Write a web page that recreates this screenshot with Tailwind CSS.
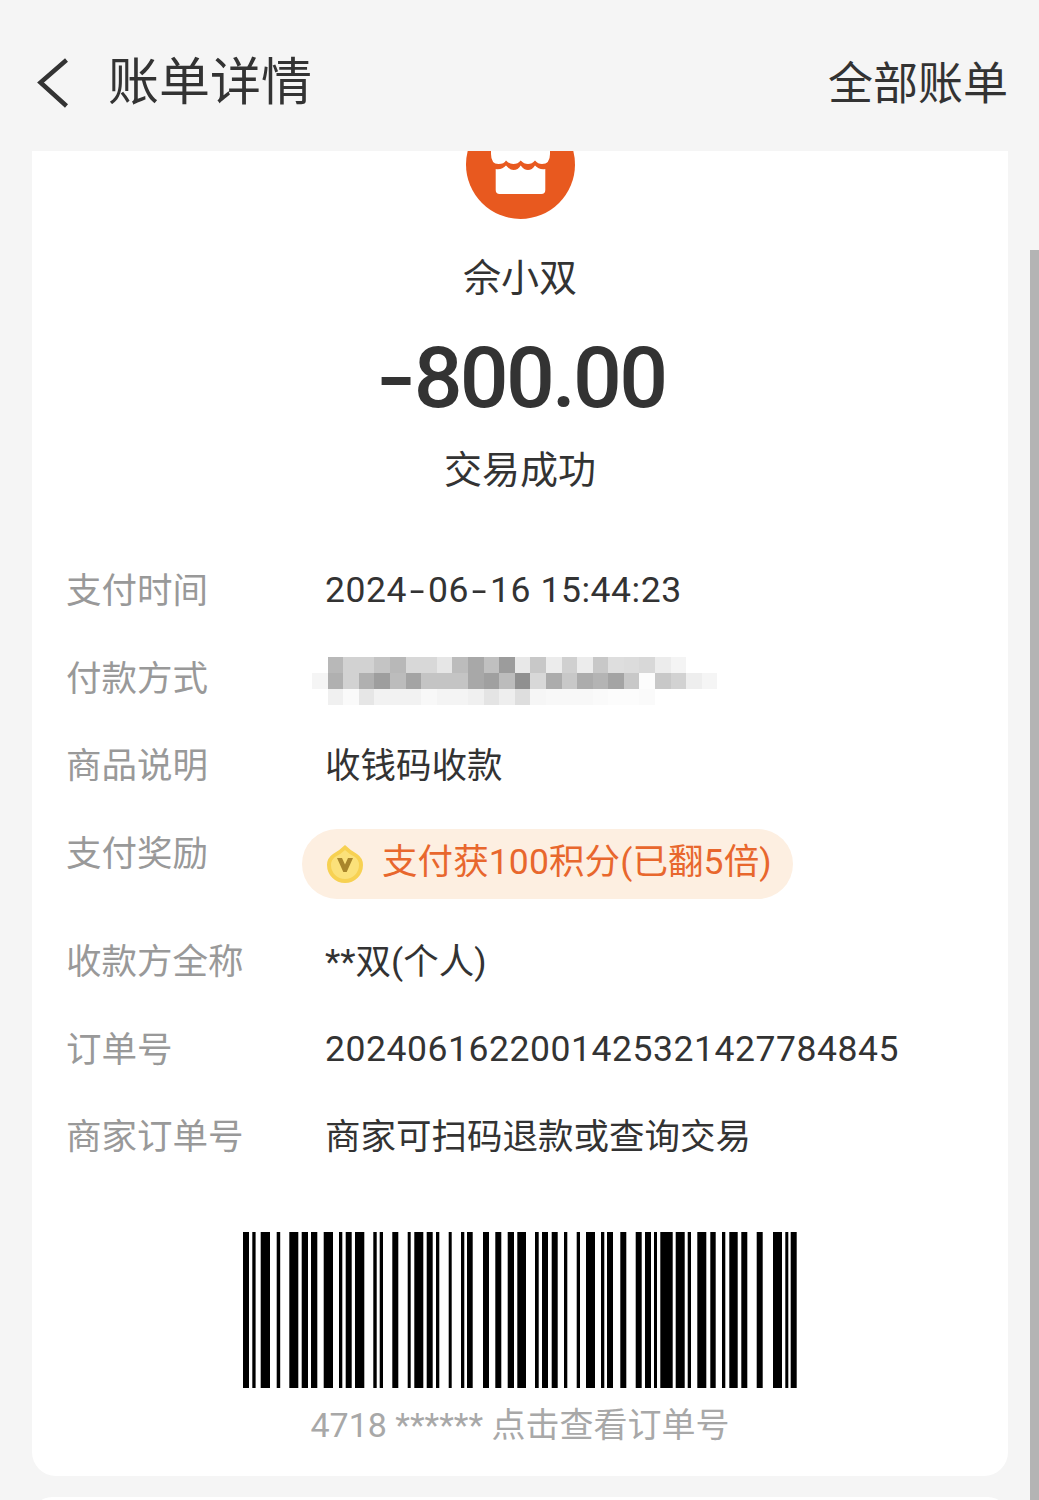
<!DOCTYPE html>
<html>

<head>
    <title>账单详情</title>
    <meta charset="utf-8" />
    <meta name="viewport" content="width=device-width, initial-scale=1.0" />
    <script src="https://cdn.jsdelivr.net/npm/@tailwindcss/browser@4"></script>
</head>

<body class="relative h-[1500px] overflow-hidden bg-[#f5f5f5] text-[#333333] font-[family-name:Roboto,'Noto_Sans_CJK_SC',sans-serif]">
    <!-- header -->
    <div class="flex h-[151px] items-start justify-between pl-[36px] pr-[31px]">
        <div class="flex items-center pt-[53px]">
            <svg class="h-[60px] w-[36px]" viewBox="0 0 36 60" fill="none" stroke="#333333" stroke-width="4.5">
                <path d="M30.5 7 L4.5 29.5 L30.5 53" />
            </svg>
            <h1 class="ml-[36px] text-[51px] leading-[60px] font-normal">账单详情</h1>
        </div>
        <div class="pt-[57px] text-[45px] leading-[56px]">全部账单</div>
    </div>

    <!-- main card -->
    <div class="mx-[32px] h-[1325px] w-[976px] overflow-hidden rounded-b-[24px] bg-white">
        <div class="flex flex-col items-center">
            <svg class="-mt-[41px] h-[109px] w-[109px]" viewBox="0 0 109 109">
                <circle cx="54.5" cy="54.5" r="54.5" fill="#e8591f" />
                <path fill="#ffffff" d="M25 0 V44 Q25 54 32.5 54 Q38 54 40 50.5 Q43 54 47.3 54 Q52 54 54.7 50.5 Q58 54 62 54 Q66 54 69 50.5 Q72 54 76 54 Q84 54 84 44 V0 Z" />
                <path fill="#ffffff" d="M29.7 59 Q36 60 40 55.5 Q44 60 47.5 60 Q52 60 54.7 55.5 Q58 60 62 60 Q66 60 69 55.5 Q73 60 79.3 59 V80 Q79.3 84 75.3 84 H33.7 Q29.7 84 29.7 80 Z" />
            </svg>
            <div class="mt-[32px] text-[38px] leading-[54px]">佘小双</div>
            <div class="mt-[23px] text-[86px] leading-[100px] font-medium tracking-[-2.8px]"><span class="inline-block w-[39px] scale-x-[1.3] text-center">-</span>800.00</div>
            <div class="mt-[15px] text-[38px] leading-[54px]">交易成功</div>
        </div>

        <!-- detail rows -->
        <div class="mt-[50px] pl-[34px] text-[35.5px] leading-[88px]">
            <div class="flex h-[87.7px]">
                <div class="w-[259px] text-[#999999]">支付时间</div>
                <div class="-mt-[1px] tracking-[0.55px]">2024<span class="inline-block w-[21px] scale-x-150 text-center">-</span>06<span class="inline-block w-[21px] scale-x-150 text-center">-</span>16 15:44:23</div>
            </div>
            <div class="flex h-[87.7px]">
                <div class="w-[259px] text-[#999999]">付款方式</div>
                <!-- mosaic over the account name -->
                <div class="-ml-[13px] mt-[22.5px] flex h-[48px] flex-col blur-[0.6px]">
                    <div class="ml-[15.6px] flex h-[16px]">
                        <div class="w-[15.6px] bg-[#b8b8b8]"></div><div class="w-[15.6px] bg-[#d2d2d2]"></div><div class="w-[15.6px] bg-[#d2d2d2]"></div><div class="w-[15.6px] bg-[#c4c4c4]"></div><div class="w-[15.6px] bg-[#b8b8b8]"></div><div class="w-[15.6px] bg-[#d8d8d8]"></div><div class="w-[15.6px] bg-[#d8d8d8]"></div><div class="w-[15.6px] bg-[#e6e6e6]"></div><div class="w-[15.6px] bg-[#bcbcbc]"></div><div class="w-[15.6px] bg-[#a8a8a8]"></div><div class="w-[15.6px] bg-[#c0c0c0]"></div><div class="w-[15.6px] bg-[#9c9c9c]"></div><div class="w-[15.6px] bg-[#e8e8e8]"></div><div class="w-[15.6px] bg-[#c8c8c8]"></div><div class="w-[15.6px] bg-[#ececec]"></div><div class="w-[15.6px] bg-[#d0d0d0]"></div><div class="w-[15.6px] bg-[#ececec]"></div><div class="w-[15.6px] bg-[#c8c8c8]"></div><div class="w-[15.6px] bg-[#dedede]"></div><div class="w-[15.6px] bg-[#dcdcdc]"></div><div class="w-[15.6px] bg-[#d8d8d8]"></div><div class="w-[15.6px] bg-[#ececec]"></div><div class="w-[15.6px] bg-[#f4f4f4]"></div>
                    </div>
                    <div class="flex h-[16px]">
                        <div class="w-[15.6px] bg-[#f5f5f5]"></div><div class="w-[15.6px] bg-[#b0b0b0]"></div><div class="w-[15.6px] bg-[#d2d2d2]"></div><div class="w-[15.6px] bg-[#b0b0b0]"></div><div class="w-[15.6px] bg-[#9e9e9e]"></div><div class="w-[15.6px] bg-[#bcbcbc]"></div><div class="w-[15.6px] bg-[#a4a4a4]"></div><div class="w-[15.6px] bg-[#c4c4c4]"></div><div class="w-[15.6px] bg-[#c4c4c4]"></div><div class="w-[15.6px] bg-[#c4c4c4]"></div><div class="w-[15.6px] bg-[#a8a8a8]"></div><div class="w-[15.6px] bg-[#a0a0a0]"></div><div class="w-[15.6px] bg-[#bcbcbc]"></div><div class="w-[15.6px] bg-[#909090]"></div><div class="w-[15.6px] bg-[#d8d8d8]"></div><div class="w-[15.6px] bg-[#acacac]"></div><div class="w-[15.6px] bg-[#c8c8c8]"></div><div class="w-[15.6px] bg-[#acacac]"></div><div class="w-[15.6px] bg-[#b4b4b4]"></div><div class="w-[15.6px] bg-[#a4a4a4]"></div><div class="w-[15.6px] bg-[#c8c8c8]"></div><div class="w-[15.6px] bg-[#fcfcfc]"></div><div class="w-[15.6px] bg-[#c8c8c8]"></div><div class="w-[15.6px] bg-[#d2d2d2]"></div><div class="w-[15.6px] bg-[#eeeeee]"></div><div class="w-[15.6px] bg-[#f5f5f5]"></div>
                    </div>
                    <div class="ml-[15.6px] flex h-[16px]">
                        <div class="w-[15.6px] bg-[#f0f0f0]"></div><div class="w-[15.6px] bg-[#fafafa]"></div><div class="w-[15.6px] bg-[#e6e6e6]"></div><div class="w-[15.6px] bg-[#f2f2f2]"></div><div class="w-[15.6px] bg-[#f2f2f2]"></div><div class="w-[15.6px] bg-[#f2f2f2]"></div><div class="w-[15.6px] bg-[#f8f8f8]"></div><div class="w-[15.6px] bg-[#f4f4f4]"></div><div class="w-[15.6px] bg-[#f4f4f4]"></div><div class="w-[15.6px] bg-[#f0f0f0]"></div><div class="w-[15.6px] bg-[#e4e4e4]"></div><div class="w-[15.6px] bg-[#eeeeee]"></div><div class="w-[15.6px] bg-[#dedede]"></div><div class="w-[15.6px] bg-[#f6f6f6]"></div><div class="w-[15.6px] bg-[#f8f8f8]"></div><div class="w-[15.6px] bg-[#f8f8f8]"></div><div class="w-[15.6px] bg-[#f8f8f8]"></div><div class="w-[15.6px] bg-[#fafafa]"></div><div class="w-[15.6px] bg-[#fcfcfc]"></div><div class="w-[15.6px] bg-[#fcfcfc]"></div><div class="w-[15.6px] bg-[#fafafa]"></div>
                    </div>
                </div>
            </div>
            <div class="flex h-[87.7px]">
                <div class="w-[259px] text-[#999999]">商品说明</div>
                <div>收钱码收款</div>
            </div>
            <div class="flex h-[108px]">
                <div class="w-[259px] text-[#999999]">支付奖励</div>
                <div class="-ml-[23px] mt-[19px] flex h-[70px] w-[491px] items-center rounded-full bg-[#fdefe1] pl-[24px] text-[#e8672d]">
                    <svg class="h-[38px] w-[38px] shrink-0" viewBox="0 0 38 38">
                        <path fill="#f7d152" d="M19 0 Q24 5 31 9 Q37 13 37 20 A18 18 0 0 1 1 20 Q1 13 7 9 Q14 5 19 0 Z" />
                        <path fill="#fbe17a" d="M19 5 Q23 9 29 12 Q33 15 33 20 A14 14 0 0 1 5 20 Q5 15 9 12 Q15 9 19 5 Z" />
                        <path fill="#a9862c" d="M11 13 L16 13 L19 19.5 L22 13 L27 13 L20.7 27 L17.3 27 Z" />
                    </svg>
                    <span class="ml-[18px] -mt-[5px] leading-[70px] tracking-[0.1px]">支付获100积分(已翻5倍)</span>
                </div>
            </div>
            <div class="flex h-[87.7px]">
                <div class="w-[259px] text-[#999999]">收款方全称</div>
                <div>**双(个人)</div>
            </div>
            <div class="flex h-[87.7px]">
                <div class="w-[259px] text-[#999999]">订单号</div>
                <div class="-mt-[1px] tracking-[0.55px]">2024061622001425321427784845</div>
            </div>
            <div class="flex h-[87.7px]">
                <div class="w-[259px] text-[#999999]">商家订单号</div>
                <div>商家可扫码退款或查询交易</div>
            </div>
        </div>

        <!-- barcode -->
        <div class="mt-[50.8px] flex flex-col items-center">
            <svg class="ml-[-1px] h-[156px] w-[554px]" viewBox="243 0 554 156" fill="#000000">
                <rect x="243" y="0" width="6" height="156" /><rect x="252.3" y="0" width="3.3" height="156" /><rect x="260.7" y="0" width="9.3" height="156" /><rect x="276.7" y="0" width="3.5" height="156" /><rect x="289.3" y="0" width="9" height="156" /><rect x="301.7" y="0" width="6.3" height="156" /><rect x="311" y="0" width="6.3" height="156" /><rect x="323.7" y="0" width="9.3" height="156" /><rect x="339" y="0" width="3.3" height="156" /><rect x="345.7" y="0" width="6" height="156" /><rect x="355" y="0" width="9.3" height="156" /><rect x="373.3" y="0" width="3.4" height="156" /><rect x="379.7" y="0" width="3.3" height="156" /><rect x="392.3" y="0" width="6" height="156" /><rect x="407.7" y="0" width="3" height="156" /><rect x="414.3" y="0" width="9" height="156" /><rect x="426.7" y="0" width="6" height="156" /><rect x="436" y="0" width="3.3" height="156" /><rect x="448.7" y="0" width="3" height="156" /><rect x="461" y="0" width="3.3" height="156" /><rect x="467" y="0" width="5.7" height="156" /><rect x="483" y="0" width="6" height="156" /><rect x="495.3" y="0" width="6" height="156" /><rect x="507.7" y="0" width="6.3" height="156" /><rect x="517.3" y="0" width="8.7" height="156" /><rect x="535" y="0" width="3.7" height="156" /><rect x="542" y="0" width="6" height="156" /><rect x="551.7" y="0" width="6" height="156" /><rect x="564" y="0" width="3.3" height="156" /><rect x="576.7" y="0" width="3.3" height="156" /><rect x="586" y="0" width="9" height="156" /><rect x="601" y="0" width="3.3" height="156" /><rect x="607" y="0" width="6" height="156" /><rect x="620.3" y="0" width="6" height="156" /><rect x="635.7" y="0" width="6" height="156" /><rect x="645" y="0" width="6" height="156" /><rect x="654" y="0" width="3" height="156" /><rect x="660.3" y="0" width="12.4" height="156" /><rect x="675.7" y="0" width="9" height="156" /><rect x="687.7" y="0" width="3.3" height="156" /><rect x="697.3" y="0" width="9" height="156" /><rect x="710.3" y="0" width="5.4" height="156" /><rect x="722" y="0" width="3.3" height="156" /><rect x="729.3" y="0" width="8.4" height="156" /><rect x="741.3" y="0" width="6" height="156" /><rect x="756.7" y="0" width="6" height="156" /><rect x="773" y="0" width="9" height="156" /><rect x="785.3" y="0" width="3" height="156" /><rect x="790.7" y="0" width="6" height="156" />
            </svg>
            <div class="mt-[14px] text-[34px] leading-[46px] text-[#a8a8a8]">4718 ****** 点击查看订单号</div>
        </div>
    </div>

    <!-- next card, just peeking in -->
    <div class="mx-[32px] mt-[21px] h-[20px] w-[976px] rounded-t-[24px] bg-white"></div>

    <!-- scrollbar -->
    <div class="absolute right-0 top-[250px] h-[1250px] w-[9px] bg-[#b4b4b4]"></div>
</body>

</html>
